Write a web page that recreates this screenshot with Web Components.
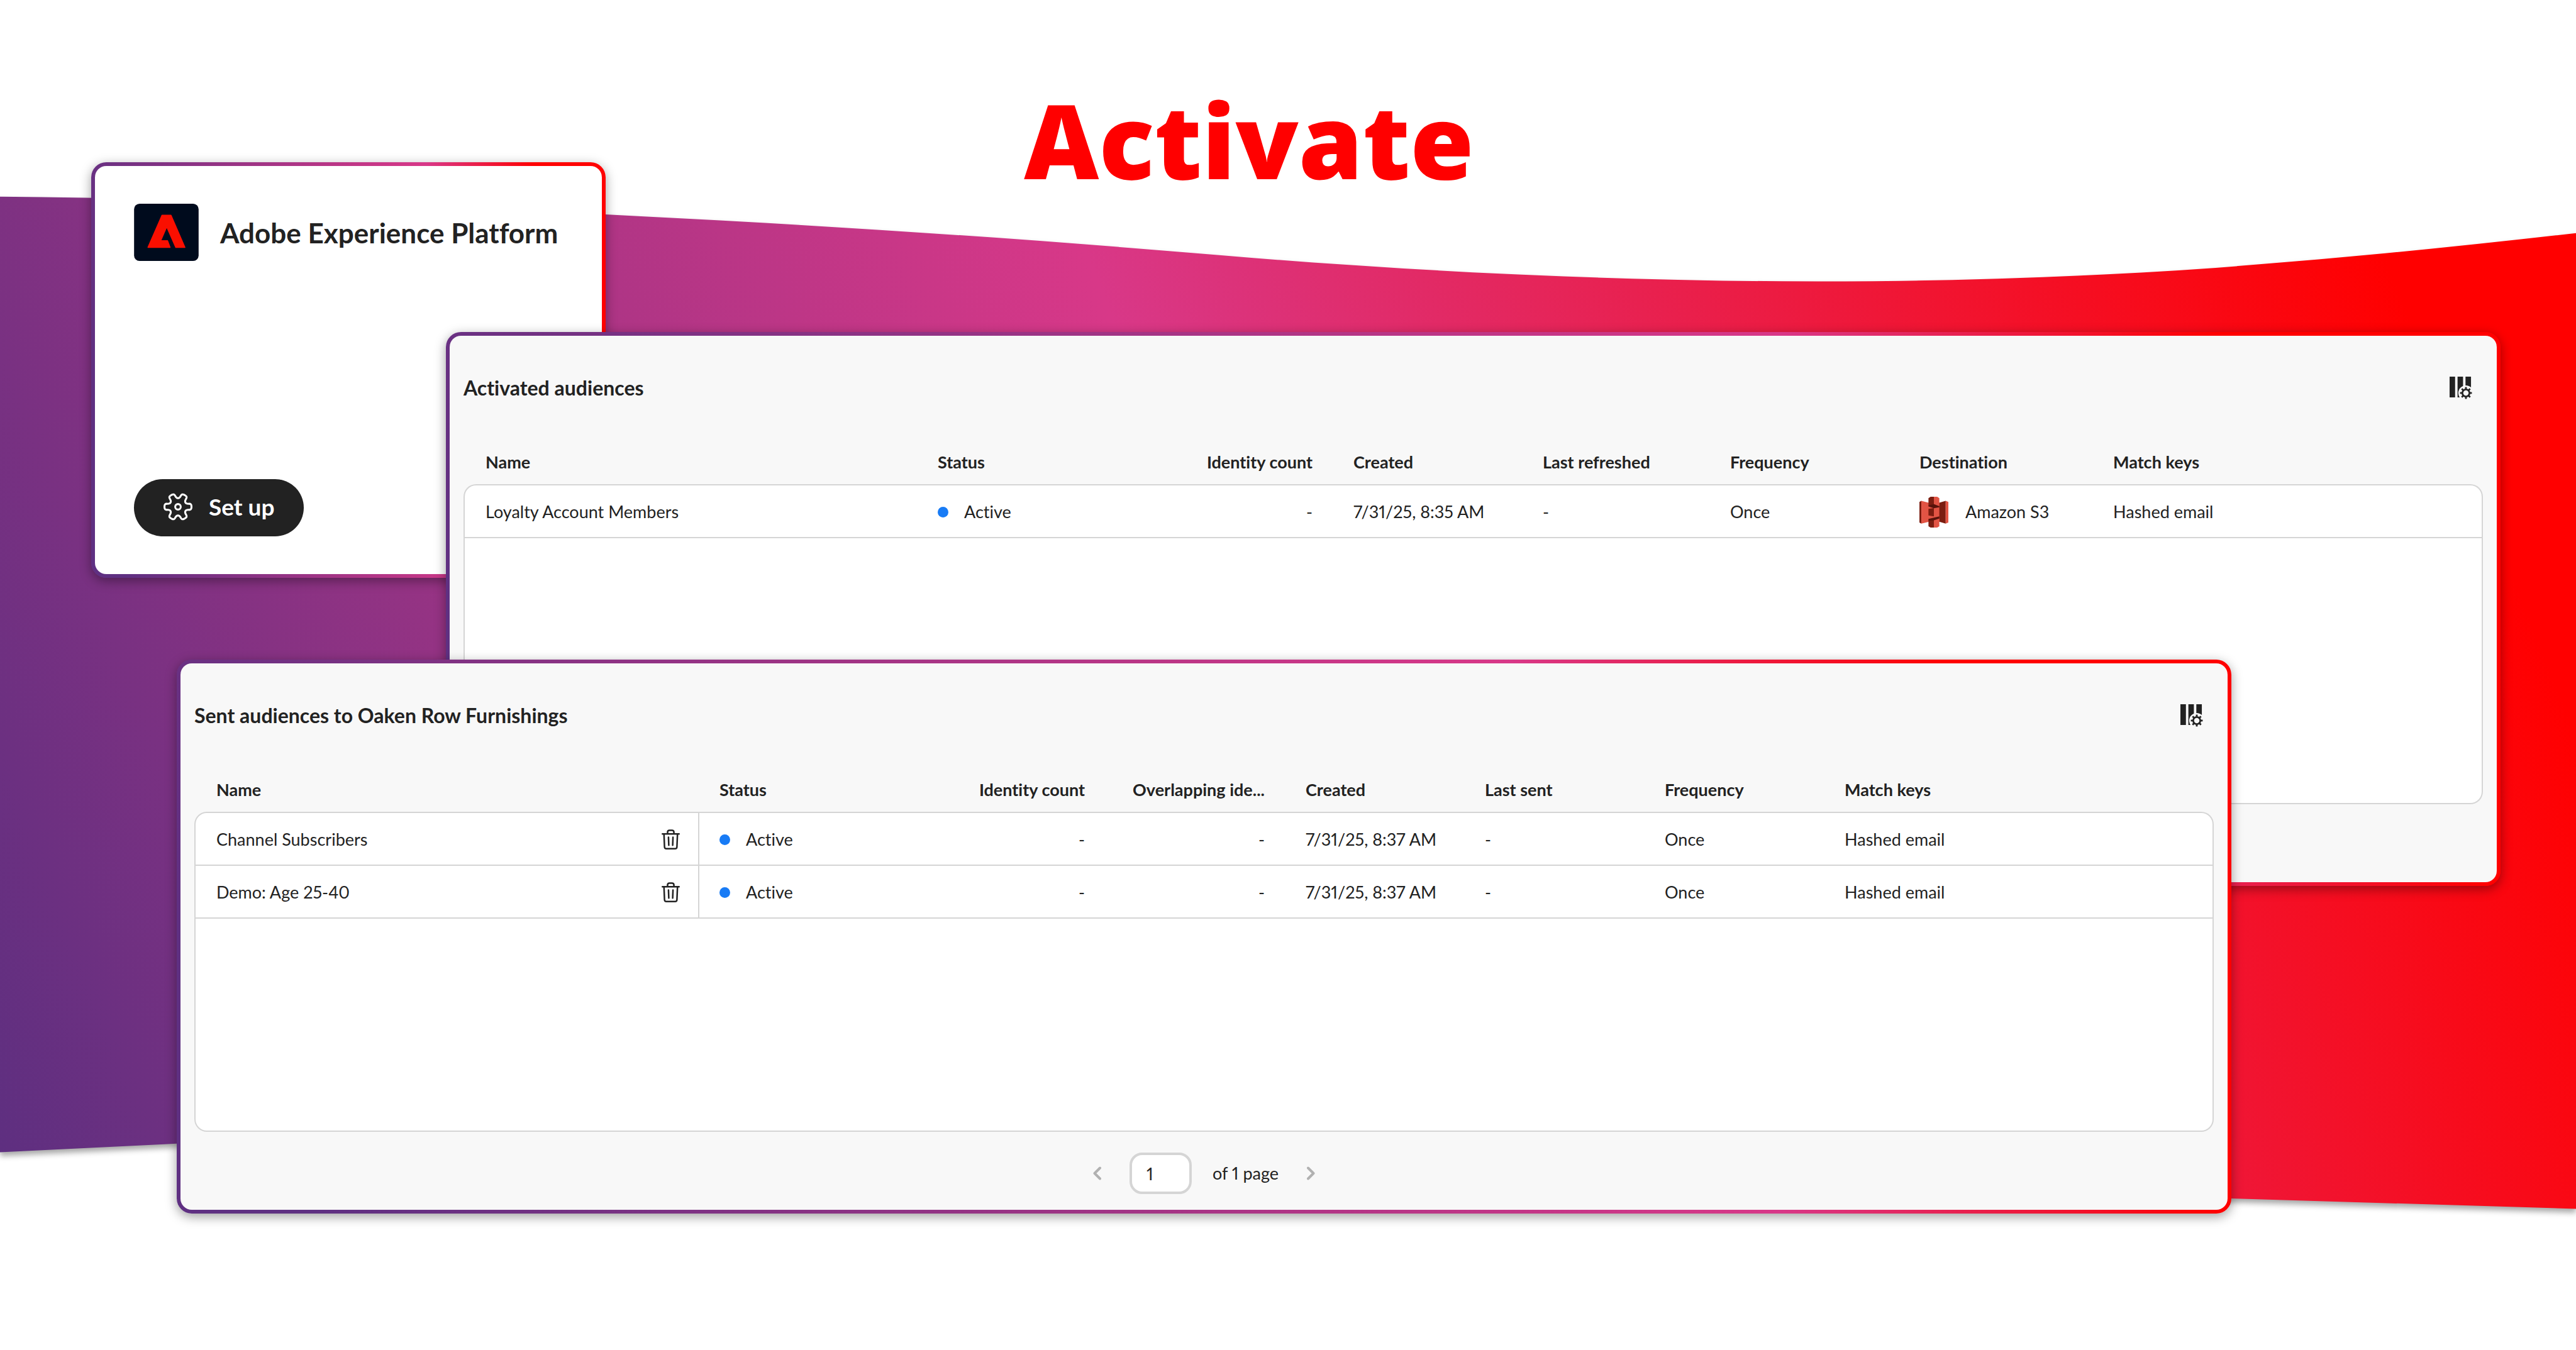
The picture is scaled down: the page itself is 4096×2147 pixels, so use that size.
<!DOCTYPE html>
<html lang="en">
<head>
<meta charset="utf-8">
<title>Activate</title>
<style>
  html, body { margin: 0; height: 100%; }
  body { background: #fff; font-family: Lato, "Open Sans", "Liberation Sans", sans-serif; font-variant-numeric: proportional-nums; font-variant-ligatures: none; color: #222; }
</style>
</head>
<body>
<activate-slide>
  <slide-title slot="title">Activate</slide-title>
  <product-card slot="product" name="Adobe Experience Platform" action="Set up"></product-card>
  <audience-panel slot="activated" source="activated" heading="Activated audiences"></audience-panel>
  <audience-panel slot="sent" source="sent" heading="Sent audiences to Oaken Row Furnishings">
    <page-picker slot="footer" page="1" pages="1"></page-picker>
  </audience-panel>
</activate-slide>

<script>
/* Closed polygon as a path with each corner rounded by r. */
function roundedPolygon(points, r) {
  const n = points.length;
  const toward = (a, b) => {
    const dx = b[0] - a[0], dy = b[1] - a[1], len = Math.hypot(dx, dy);
    const k = Math.min(r, len / 2) / len;
    return (a[0] + dx * k).toFixed(2) + ' ' + (a[1] + dy * k).toFixed(2);
  };
  return points.map((p, i) => {
    const prev = points[(i + n - 1) % n], next = points[(i + 1) % n];
    return (i ? 'L' : 'M') + toward(p, prev) + 'Q' + p[0].toFixed(2) + ' ' + p[1].toFixed(2) + ' ' + toward(p, next);
  }).join('') + 'Z';
}

function gearPoints(cx, cy, inner, outer, teeth, baseHalf, tipHalf) {
  const out = [];
  const at = (deg, rad) => [cx + rad * Math.cos(deg * Math.PI / 180), cy + rad * Math.sin(deg * Math.PI / 180)];
  for (let i = 0; i < teeth; i++) {
    const a = i * 360 / teeth;
    out.push(at(a - baseHalf, inner), at(a - tipHalf, outer), at(a + tipHalf, outer), at(a + baseHalf, inner));
  }
  return out;
}

const spokes = Array.from({ length: 8 }, (_, i) =>
  `<path d="M26.7 20V17" transform="rotate(${i * 45} 26.7 26.7)"/>`).join('');

const ICONS = {
  gear: `<svg width="46" height="44" viewBox="0 0 48 46" fill="none" stroke="#fff" stroke-width="3.2" stroke-linejoin="round">
    <path d="${roundedPolygon(gearPoints(24, 23, 14.5, 23, 6, 20, 13), 4)}"/><circle cx="24" cy="23" r="4.6"/></svg>`,
  columns: `<svg width="36" height="36" viewBox="0 0 37 37">
    <path fill="#222" d="M0 0h9v34H0zM13 0h9v34h-9zM26 0h9v34h-9z"/>
    <circle cx="26.7" cy="26.7" r="12.4" fill="#f8f8f8"/>
    <g fill="none" stroke="#222" stroke-width="2.9"><circle cx="26.7" cy="26.7" r="5.8"/>${spokes}</g></svg>`,
  trash: `<svg width="29" height="32" viewBox="0 0 30 33" fill="none" stroke="#222" stroke-width="2.6" stroke-linecap="round" stroke-linejoin="round">
    <path d="M1.3 7.4h27.4M9.8 7.2V4.4a3 3 0 0 1 3-3h4.4a3 3 0 0 1 3 3v2.8M3.9 8l.9 20.9a3 3 0 0 0 3 2.8h14.4a3 3 0 0 0 3-2.8L26.1 8M11.3 13l.5 13M18.7 13l-.5 13"/></svg>`,
  s3: `<svg width="46" height="49" viewBox="0 0 48 51">
    <path fill="#7b1d10" d="M0 8.5 3.2 6.6v38L0 42.7z"/>
    <path fill="#e25444" d="M3.2 6.6 16 10v31.5L3.2 44.6z"/>
    <path fill="#7b1d10" d="M32 10l11.6-3.4v38L32 41.2z"/>
    <path fill="#e25444" d="M43.6 6.6 48 8.5v34.2l-4.4 1.9z"/>
    <path fill="#e25444" d="M15 10h18v31H15z"/>
    <path fill="#7b1d10" d="M15 2.2 18.5 0H24v12.6L15 15z"/>
    <path fill="#e25444" d="M24 0h5.5L33 2.2V15l-9-2.4z"/>
    <path fill="#58130b" d="M15 14.4l9-2.2 9 3.4v1.8l-9 1.6-9-3z"/>
    <path fill="#7b1d10" d="M15 20l9-1.4v14L15 31z"/>
    <path fill="#7b1d10" d="M15 39.4l9-2.8V51h-5.5L15 49z"/>
    <path fill="#e25444" d="M24 36.6 33 36.2V49l-3.5 2H24z"/>
    <path fill="#58130b" d="M15 36.8l18-4.2v3.6l-9 2.8-9 .6z"/></svg>`,
  previous: `<svg width="13" height="22" viewBox="0 0 13 22" fill="none" stroke="#b1b1b1" stroke-width="4" stroke-linecap="round" stroke-linejoin="round"><path d="M11 2.5 2.5 11l8.5 8.5"/></svg>`,
  next: `<svg width="13" height="22" viewBox="0 0 13 22" fill="none" stroke="#b1b1b1" stroke-width="4" stroke-linecap="round" stroke-linejoin="round"><path d="M2 2.5 10.5 11 2 19.5"/></svg>`,
  adobe: `<svg width="103" height="91" viewBox="0 0 106 94">
    <rect width="106" height="94" rx="9" fill="#000b1d"/>
    <path fill="#fa0f00" stroke="#fa0f00" stroke-width="2" stroke-linejoin="round" d="M46 19h14.5L83.3 71.6H68.6L53.6 37.5 43.4 61h11.5l4 10.6H23z"/></svg>`
};

class BaseElement extends HTMLElement {
  connectedCallback() {
    if (this.shadowRoot) return;
    this.attachShadow({ mode: 'open' }).innerHTML = this.render();
  }
}

customElements.define('ui-icon', class extends BaseElement {
  render() {
    return `<style>:host{display:inline-flex;flex:none} svg{display:block}</style>${ICONS[this.getAttribute('name')]}`;
  }
});

/* Brand wave behind everything. */
customElements.define('brand-wave', class extends BaseElement {
  render() {
    return `<style>:host{display:block} svg{display:block;width:100%;height:100%;filter:drop-shadow(0 6px 5px rgba(0,0,0,.35))}</style>
    <svg viewBox="0 0 4232 2218" preserveAspectRatio="none" aria-hidden="true">
      <defs><linearGradient id="g" gradientUnits="userSpaceOnUse" x1="0" y1="1893" x2="3885" y2="339">
        <stop offset="0" stop-color="#5e2f80"/><stop offset=".527" stop-color="#d83888"/><stop offset="1" stop-color="#ff0000"/>
      </linearGradient></defs>
      <path fill="url(#g)" d="M0 323C700 330 1400 368 2000 419C2550 465 3100 478 3640 440C3850 424 4040 405 4232 383V1986L3666 1969C2600 1930 1500 1830 290 1879L0 1893Z"/>
    </svg>`;
  }
});

customElements.define('slide-title', class extends BaseElement {
  render() {
    return `<style>
      :host{display:flex;justify-content:center;padding:134px 124px 0 0}
      h1{margin:0;font:800 164px/176px "Open Sans","Noto Sans",sans-serif;color:#f00}
    </style><h1><slot></slot></h1>`;
  }
});

customElements.define('gradient-card', class extends BaseElement {
  render() {
    return `<style>
      :host{display:flex;flex-direction:column;box-sizing:border-box;border:6px solid transparent;border-radius:24px;
        background:linear-gradient(var(--card-fill,#fff),var(--card-fill,#fff)) padding-box,
          linear-gradient(var(--card-angle,64deg),#5f3082 6%,#d83888 69%,#f00 88%) border-box;
        box-shadow:0 5px 18px rgba(0,0,0,.38)}
    </style><slot></slot>`;
  }
});

customElements.define('product-card', class extends BaseElement {
  render() {
    return `<style>
      :host{display:block}
      gradient-card{--card-angle:81deg;height:661px;padding:60px 62px;justify-content:space-between;align-items:flex-start}
      header{display:flex;align-items:center;gap:34px}
      h2{margin:0;font-size:44px;line-height:52px;font-weight:700;white-space:nowrap}
      button{display:flex;align-items:center;gap:26px;height:91px;padding:0 47px 4px;border:0;border-radius:46px;
        background:#222;color:#fff;font:700 37px/44px Lato,"Open Sans",sans-serif}
    </style>
    <gradient-card>
      <header><ui-icon name="adobe"></ui-icon><h2>${this.getAttribute('name')}</h2></header>
      <button type="button"><ui-icon name="gear"></ui-icon>${this.getAttribute('action')}</button>
    </gradient-card>`;
  }
});

customElements.define('page-picker', class extends BaseElement {
  render() {
    return `<style>
      :host{display:flex;align-items:center;font-size:27px;line-height:32px}
      button{display:flex;padding:0;border:0;background:none}
      label{display:flex;align-items:center;gap:33px;margin:0 45px}
      input{box-sizing:border-box;width:99px;height:66px;padding:0 0 0 23px;border:4px solid #d5d5d5;border-radius:20px;
        background:#fff;color:#222;font:inherit}
    </style>
    <button type="button" aria-label="Previous page"><ui-icon name="previous"></ui-icon></button>
    <label><input type="text" value="${this.getAttribute('page')}" aria-label="Page"><span>of ${this.getAttribute('pages')} page</span></label>
    <button type="button" aria-label="Next page"><ui-icon name="next"></ui-icon></button>`;
  }
});

customElements.define('status-light', class extends BaseElement {
  render() {
    return `<style>
      :host{display:flex;align-items:center;gap:25px}
      i{width:17px;height:17px;border-radius:50%;background:#187bf5}
    </style><i></i><span><slot></slot></span>`;
  }
});

const status = text => `<status-light>${text}</status-light>`;
const destination = text => `<div class="with-icon"><ui-icon name="s3"></ui-icon>${text}</div>`;
const deletable = text => `<div class="deletable">${text}<button type="button" aria-label="Delete ${text}"><ui-icon name="trash"></ui-icon></button></div>`;

const TABLES = {
  activated: {
    columns: [['Name', 722], ['Status', 360], ['Identity count', 301, 'end'], ['Created', 301], ['Last refreshed', 298],
      ['Frequency', 301], ['Destination', 308], ['Match keys', 0]],
    rows: [['Loyalty Account Members', status('Active'), '-', '7/31/25, 8:35 AM', '-', 'Once', destination('Amazon S3'), 'Hashed email']],
    filler: 423
  },
  sent: {
    columns: [['Name', 803, 'actions'], ['Status', 360], ['Identity count', 286, 'end'], ['Overlapping ide...', 286, 'end'], ['Created', 285],
      ['Last sent', 286], ['Frequency', 286], ['Match keys', 0]],
    rows: [
      [deletable('Channel Subscribers'), status('Active'), '-', '-', '7/31/25, 8:37 AM', '-', 'Once', 'Hashed email'],
      [deletable('Demo: Age 25-40'), status('Active'), '-', '-', '7/31/25, 8:37 AM', '-', 'Once', 'Hashed email']
    ],
    filler: 339
  }
};

customElements.define('audience-panel', class extends BaseElement {
  render() {
    const { columns, rows, filler } = TABLES[this.getAttribute('source')];
    const cell = (tag, i, html) => `<${tag} class="${columns[i][2] || ''}">${html}</${tag}>`;
    return `<style>
      :host{display:block}
      gradient-card{--card-fill:#f8f8f8;padding:59px 22px 0}
      header{display:flex;align-items:center;justify-content:space-between;height:48px;padding-right:17px;margin-bottom:59px}
      h2{margin:0;font-size:32px;line-height:38px;font-weight:700}
      button{display:flex;padding:0;border:0;background:none}
      table{width:100%;table-layout:fixed;border-collapse:separate;border-spacing:0;font-size:27px;line-height:32px}
      th{height:70px;padding:0 33px 0 32px;text-align:left;font-weight:700;white-space:nowrap}
      th:first-child{padding-left:35px}
      td{box-sizing:border-box;height:84px;padding:2px 33px 0 32px;background:#fff;border-bottom:2px solid #d5d5d5;white-space:nowrap}
      td:first-child{padding-left:33px;border-left:2px solid #d5d5d5}
      td:last-child{border-right:2px solid #d5d5d5}
      tbody tr:first-child td{height:86px;border-top:2px solid #d5d5d5}
      tbody tr:first-child td:first-child{border-top-left-radius:20px}
      tbody tr:first-child td:last-child{border-top-right-radius:20px}
      .filler td{height:${filler}px;border-radius:0 0 20px 20px}
      .end{text-align:right}
      td.actions{padding-right:29px;border-right:2px solid #d5d5d5}
      .deletable{display:flex;align-items:center;justify-content:space-between}
      .with-icon{display:flex;align-items:center;gap:27px}
      footer{display:flex;align-items:center;justify-content:center;height:124px;padding-top:8px;box-sizing:border-box}
    </style>
    <gradient-card>
      <header><h2>${this.getAttribute('heading')}</h2><button type="button" aria-label="Customize columns"><ui-icon name="columns"></ui-icon></button></header>
      <table>
        <colgroup>${columns.map(c => c[1] ? `<col style="width:${c[1]}px">` : '<col>').join('')}</colgroup>
        <thead><tr>${columns.map((c, i) => cell('th', i, c[0])).join('')}</tr></thead>
        <tbody>${rows.map(r => `<tr>${r.map((v, i) => cell('td', i, v)).join('')}</tr>`).join('')}
          <tr class="filler"><td colspan="${columns.length}"></td></tr></tbody>
      </table>
      <footer><slot name="footer"></slot></footer>
    </gradient-card>`;
  }
});

/* The cards overlap freely on the slide, so they are pinned to it. */
customElements.define('activate-slide', class extends BaseElement {
  render() {
    return `<style>
      :host{display:block;position:relative;height:100%;overflow:hidden}
      brand-wave{position:absolute;inset:0}
      .title{position:relative}
      .product,.activated,.sent{position:absolute}
      .product{left:145px;top:258px;width:818px}
      .activated{left:709px;right:120px;top:528px}
      .sent{left:281px;right:548px;top:1049px}
    </style>
    <brand-wave></brand-wave>
    <div class="title"><slot name="title"></slot></div>
    <div class="product"><slot name="product"></slot></div>
    <div class="activated"><slot name="activated"></slot></div>
    <div class="sent"><slot name="sent"></slot></div>`;
  }
});
</script>
</body>
</html>
